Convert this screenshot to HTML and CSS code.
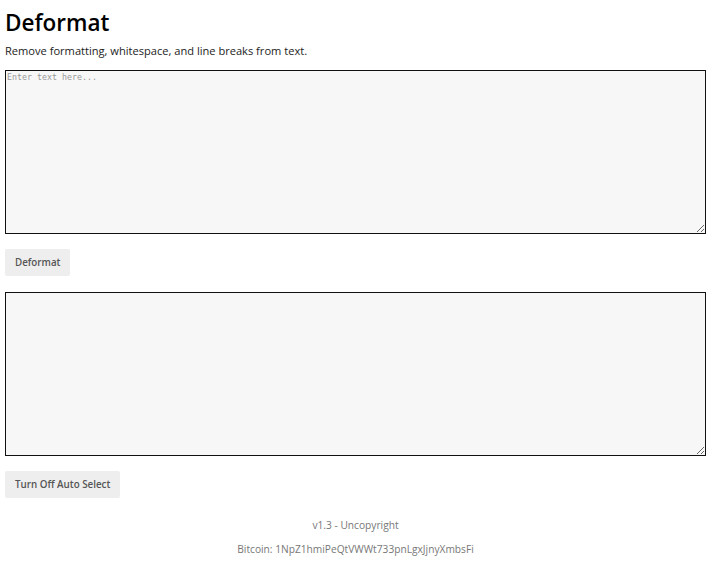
FILE: index.html
```html
<!DOCTYPE html>
<html>
<head>
<meta charset="utf-8">
<link rel="stylesheet" href="styles.css">
</head>
<body>
<h1 class="title">Deformat</h1>
<p class="subtitle">Remove formatting, whitespace, and line breaks from text.</p>
<textarea class="box" placeholder="Enter text here..."></textarea>
<div class="actions"><button class="btn">Deformat</button></div>
<textarea class="box"></textarea>
<div class="actions"><button class="btn">Turn Off Auto Select</button></div>
<footer class="footer">
<p class="foot-line">v1.3 - Uncopyright</p>
<p class="foot-line">Bitcoin: 1NpZ1hmiPeQtVWWt733pnLgxJjnyXmbsFi</p>
</footer>
</body>
</html>
```
FILE: styles.css
```css
html, body {
  margin: 0;
  padding: 0;
  background: #fff;
}
body {
  padding: 6px 6px 0 5px;
  font-family: "Open Sans", sans-serif;
  color: #111;
}
.title {
  margin: 0;
  font-size: 22.5px;
  line-height: 33px;
  font-weight: 600;
  color: #000;
}
.subtitle {
  margin: 2px 0 0 0;
  font-size: 11.1px;
  line-height: 19px;
  color: #222;
}
.box {
  display: block;
  box-sizing: border-box;
  width: 100%;
  height: 164px;
  margin: 10px 0 0 0;
  padding: 1px 1px;
  border: 1px solid #111;
  border-radius: 0;
  background: #f7f7f7;
  font-family: "DejaVu Sans Mono", monospace;
  font-size: 8.3px;
  line-height: 10px;
  resize: vertical;
  outline: none;
}
.box::placeholder {
  color: #999;
}
.actions {
  margin-top: 15px;
  display: flex;
}
.btn {
  height: 27px;
  padding: 0 10px;
  border: none;
  border-radius: 2px;
  background: #eeeeee;
  color: #555;
  font-family: "Open Sans", sans-serif;
  font-size: 9.8px;
  font-weight: 600;
}
.actions + .box {
  margin-top: 16px;
}
.footer {
  margin-top: 20px;
  text-align: center;
  color: #777;
  font-size: 10.2px;
}
.foot-line {
  margin: 0 0 10px 0;
  line-height: 14px;
}
```
